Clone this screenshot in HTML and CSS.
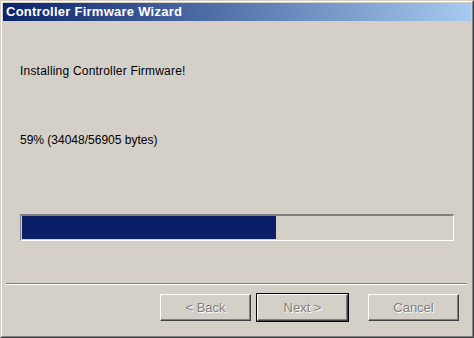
FILE: index.html
```html
<!DOCTYPE html>
<html lang="en">

<head>
    <meta charset="UTF-8">
    <title>Controller Firmware Wizard</title>
    <link rel="stylesheet" href="styles.css">
</head>

<body>
    <div class="window">
        <div class="frame">
            <div class="titlebar">Controller Firmware Wizard</div>
            <div class="content">
                <p class="message">Installing Controller Firmware!</p>
                <p class="status">59% (34048/56905 bytes)</p>
                <div class="progress">
                    <div class="progress-fill" style="width: 59%"></div>
                </div>
            </div>
            <div class="separator"></div>
            <div class="buttons">
                <button class="btn" disabled>&lt; Back</button>
                <button class="btn default" disabled>Next &gt;</button>
                <button class="btn cancel" disabled>Cancel</button>
            </div>
        </div>
    </div>
</body>

</html>
```

FILE: styles.css
```css
* {
    margin: 0;
    padding: 0;
    box-sizing: border-box;
}

body {
    background: #d4d0c8;
    font-family: 'Liberation Sans', Arial, sans-serif;
    font-size: 12px;
    color: #000;
}

.window {
    width: 474px;
    height: 338px;
    border: 1px solid;
    border-color: #d4d0c8 #404040 #404040 #d4d0c8;
}

.frame {
    height: 100%;
    border: 1px solid;
    border-color: #ffffff #808080 #808080 #ffffff;
    padding: 1px;
    display: flex;
    flex-direction: column;
}

.titlebar {
    height: 18px;
    background: linear-gradient(to right, #0a246a, #a6caf0);
    color: #fff;
    font-weight: bold;
    font-size: 13px;
    letter-spacing: 0.25px;
    line-height: 18px;
    padding-left: 3px;
    white-space: nowrap;
}

.content {
    padding: 0 17px;
}

.message {
    margin-top: 42px;
    line-height: 16px;
    letter-spacing: 0.2px;
}

.status {
    margin-top: 53px;
    line-height: 16px;
}

.progress {
    margin-top: 66px;
    height: 27px;
    border: 1px solid;
    border-color: #808080 #ffffff #ffffff #808080;
    border-top-width: 2px;
    padding: 0 0 1px 1px;
}

.progress-fill {
    height: 100%;
    background: #0a1f68;
}

.separator {
    margin: 42px 4px 0 3px;
    border-top: 1px solid #808080;
    border-bottom: 1px solid #ffffff;
}

.buttons {
    display: flex;
    padding: 9px 0 0 157px;
}

.btn {
    width: 91px;
    height: 27px;
    font-family: inherit;
    font-size: 13px;
    background: #d4d0c8;
    border: 1px solid;
    border-color: #ffffff #404040 #404040 #ffffff;
    box-shadow: inset -1px -1px 0 #808080;
    color: #808080;
    text-shadow: 1px 1px 0 #ffffff;
}

.btn + .btn {
    margin-left: 6px;
}

.btn.default {
    outline: 1px solid #000;
}

.btn.cancel {
    margin-left: 20px;
}
```
